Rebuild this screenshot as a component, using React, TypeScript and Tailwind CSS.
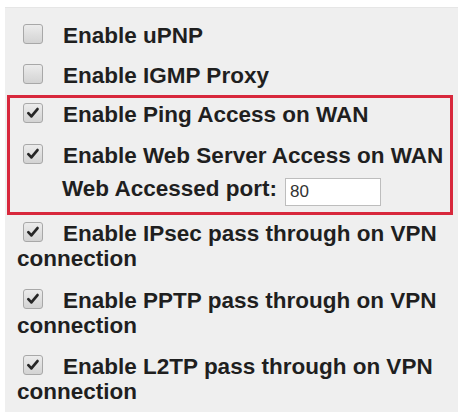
const Box = ({ checked }: { checked: boolean }) => (
  <span className="inline-block w-[20px] h-[20px] ml-[6px] mr-[20px] align-[-1px] rounded-[3px] border border-[#a8a8a8] bg-gradient-to-b from-[#ececec] to-[#d3d3d3]">
    {checked && (
      <svg viewBox="0 0 20 20" className="w-full h-full">
        <path d="M4.8 10.2 L8.2 13.8 L15 5.6" fill="none" stroke="#262626" strokeWidth="3" strokeLinecap="round" strokeLinejoin="round" />
      </svg>
    )}
  </span>
);

const Row = ({ checked, label, className }: { checked: boolean; label: string; className?: string }) => (
  <div className={className}>
    <Box checked={checked} />
    {label}
  </div>
);

export default function App() {
  return (
    <div className="w-[462px] h-[412px] bg-white pt-[7px] pl-[5px] overflow-hidden">
      <div
        className="w-[453px] h-[405px] bg-[#efefef] border-t border-[#e6e6e6] pt-[15px] pl-[12px] pr-[8px] text-[22.5px] leading-[25px] font-bold text-[#1f1f1f]"
        style={{ fontFamily: '"Liberation Sans", Arial, sans-serif' }}
      >
        <Row checked={false} label="Enable uPNP" />
        <Row checked={false} label="Enable IGMP Proxy" className="mt-[15px]" />

        <div className="mt-[7px] -ml-[10px] -mr-[3px] border-[3px] border-[#d8283c] pl-[7px] pt-[4px] pb-[6px]">
          <Row checked label="Enable Ping Access on WAN" />
          <Row checked label="Enable Web Server Access on WAN" className="mt-[16px]" />
          <div className="mt-[8px] pl-[45px] flex items-start">
            <span>Web Accessed port:</span>
            <input
              type="text"
              defaultValue="80"
              className="ml-[8px] mt-[2px] w-[96px] h-[28px] border border-[#bdbdbd] bg-white px-[4px] text-[17px] font-normal text-[#333] outline-none"
              style={{ fontFamily: '"Liberation Sans", Arial, sans-serif' }}
            />
          </div>
        </div>

        <Row checked label="Enable IPsec pass through on VPN connection" className="mt-[6px]" />
        <Row checked label="Enable PPTP pass through on VPN connection" className="mt-[17px]" />
        <Row checked label="Enable L2TP pass through on VPN connection" className="mt-[16px]" />
      </div>
    </div>
  );
}
